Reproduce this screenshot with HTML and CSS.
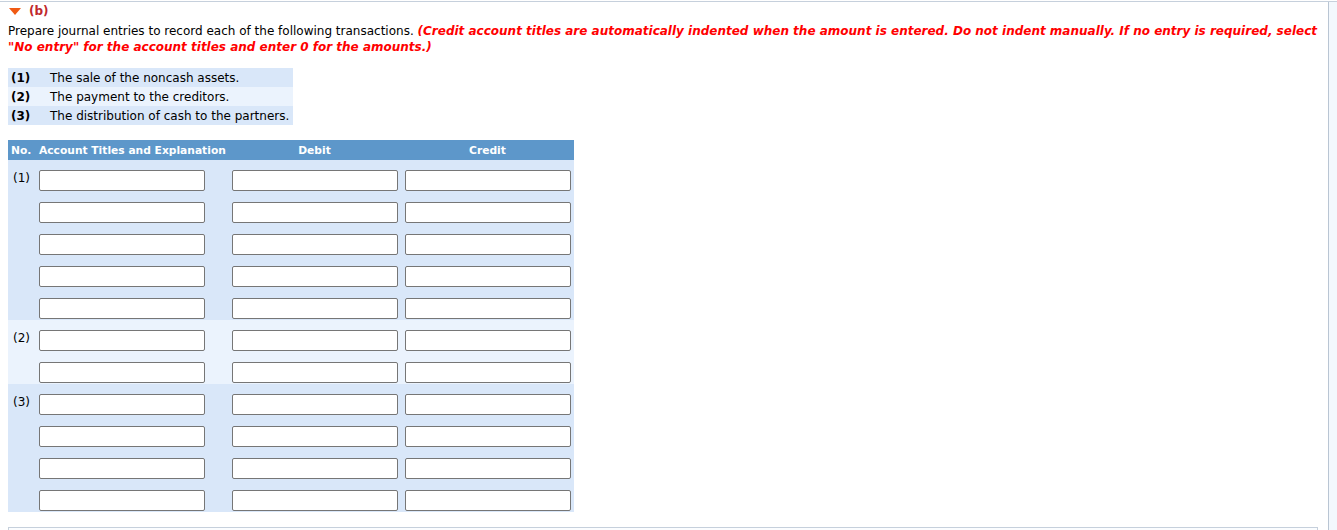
FILE: index.html
```html
<!DOCTYPE html>
<html>
<head>
<meta charset="utf-8">
<link rel="stylesheet" href="styles.css">
</head>
<body>
<div class="page">
  <div class="main">
    <div class="part-head">
      <span class="tri"></span><span class="part-label">(b)</span>
    </div>
    <p class="instr">Prepare journal entries to record each of the following transactions. <em class="warn">(Credit account titles are automatically indented when the amount is entered. Do not indent manually. If no entry is required, select "No entry" for the account titles and enter 0 for the amounts.)</em></p>

    <div class="trans">
      <div class="trow dark"><span class="tnum">(1)</span><span>The sale of the noncash assets.</span></div>
      <div class="trow light"><span class="tnum">(2)</span><span>The payment to the creditors.</span></div>
      <div class="trow dark"><span class="tnum">(3)</span><span>The distribution of cash to the partners.</span></div>
    </div>

    <div class="journal">
      <div class="jhead">
        <div class="hc hno">No.</div>
        <div class="hc hacct">Account Titles and Explanation</div>
        <div class="hc hamt">Debit</div>
        <div class="hc hamt">Credit</div>
      </div>

      <div class="group dark">
        <div class="jrow"><div class="num">(1)</div><div class="c acct"><span class="inp"></span></div><div class="c amt"><span class="inp"></span></div><div class="c amt"><span class="inp"></span></div></div>
        <div class="jrow"><div class="num"></div><div class="c acct"><span class="inp"></span></div><div class="c amt"><span class="inp"></span></div><div class="c amt"><span class="inp"></span></div></div>
        <div class="jrow"><div class="num"></div><div class="c acct"><span class="inp"></span></div><div class="c amt"><span class="inp"></span></div><div class="c amt"><span class="inp"></span></div></div>
        <div class="jrow"><div class="num"></div><div class="c acct"><span class="inp"></span></div><div class="c amt"><span class="inp"></span></div><div class="c amt"><span class="inp"></span></div></div>
        <div class="jrow"><div class="num"></div><div class="c acct"><span class="inp"></span></div><div class="c amt"><span class="inp"></span></div><div class="c amt"><span class="inp"></span></div></div>
      </div>
      <div class="group light">
        <div class="jrow"><div class="num">(2)</div><div class="c acct"><span class="inp"></span></div><div class="c amt"><span class="inp"></span></div><div class="c amt"><span class="inp"></span></div></div>
        <div class="jrow"><div class="num"></div><div class="c acct"><span class="inp"></span></div><div class="c amt"><span class="inp"></span></div><div class="c amt"><span class="inp"></span></div></div>
      </div>
      <div class="group dark">
        <div class="jrow"><div class="num">(3)</div><div class="c acct"><span class="inp"></span></div><div class="c amt"><span class="inp"></span></div><div class="c amt"><span class="inp"></span></div></div>
        <div class="jrow"><div class="num"></div><div class="c acct"><span class="inp"></span></div><div class="c amt"><span class="inp"></span></div><div class="c amt"><span class="inp"></span></div></div>
        <div class="jrow"><div class="num"></div><div class="c acct"><span class="inp"></span></div><div class="c amt"><span class="inp"></span></div><div class="c amt"><span class="inp"></span></div></div>
        <div class="jrow"><div class="num"></div><div class="c acct"><span class="inp"></span></div><div class="c amt"><span class="inp"></span></div><div class="c amt"><span class="inp"></span></div></div>
      </div>
    </div>

    <div class="next-box"></div>
  </div>
  <div class="side"></div>
</div>
</body>
</html>
```

FILE: styles.css
```css
html, body {
  margin: 0;
  padding: 0;
  background: #ffffff;
}
body {
  font-family: "DejaVu Sans", Verdana, sans-serif;
  font-size: 12px;
  color: #000;
}
.page {
  display: flex;
  height: 530px;
  margin-top: 1px;
  border-top: 1px solid #c6d0dc;
  overflow: hidden;
}
.main {
  width: 1320px;
  padding-left: 8px;
  flex: none;
}
.side {
  flex: 1;
  background: #f3f8fd;
  border-left: 1px solid #b9c5d3;
}
.part-head {
  display: flex;
  align-items: center;
  height: 16px;
  margin-top: 1px;
}
.tri {
  width: 0;
  height: 0;
  margin-left: 1px;
  border-left: 6px solid transparent;
  border-right: 6px solid transparent;
  border-top: 7px solid #f05a14;
  margin-right: 8px;
}
.part-label {
  font-weight: bold;
  color: #c0282d;
  font-size: 12px;
}
.instr {
  margin: 4px 0 0 0;
  width: 1310px;
  line-height: 16px;
  font-size: 12px;
}
.warn {
  color: #ff0000;
  font-weight: bold;
  font-style: italic;
}
.trans {
  margin-top: 13px;
  width: 285px;
}
.trow {
  display: flex;
  height: 19px;
  align-items: center;
}
.tnum {
  width: 42px;
  padding-left: 3px;
  font-weight: bold;
  box-sizing: border-box;
  flex: none;
}
.dark { background: #d9e7f9; }
.light { background: #ebf3fd; }
.journal {
  margin-top: 15px;
  width: 566px;
}
.jhead, .jrow {
  display: grid;
  grid-template-columns: 31px 189px 173px 173px;
}
.jhead {
  background: #5d97ca;
  height: 20px;
  align-items: center;
  color: #fff;
  font-weight: bold;
  font-size: 10.7px;
}
.hc { white-space: nowrap; }
.hno { padding-left: 3px; }
.hamt { text-align: center; }
.jrow {
  height: 32px;
}
.num {
  padding: 11px 0 0 5px;
  font-size: 12px;
}
.c {
  padding-top: 10px;
}
.amt {
  display: flex;
  justify-content: center;
}
.inp {
  display: block;
  width: 166px;
  height: 21px;
  box-sizing: border-box;
  border: 1px solid #767676;
  border-radius: 2px;
  background: #fff;
}
.next-box {
  margin-top: 15px;
  width: 1310px;
  height: 20px;
  border: 1px solid #c6d0dc;
  background: #fbfdff;
  box-sizing: border-box;
}
```
